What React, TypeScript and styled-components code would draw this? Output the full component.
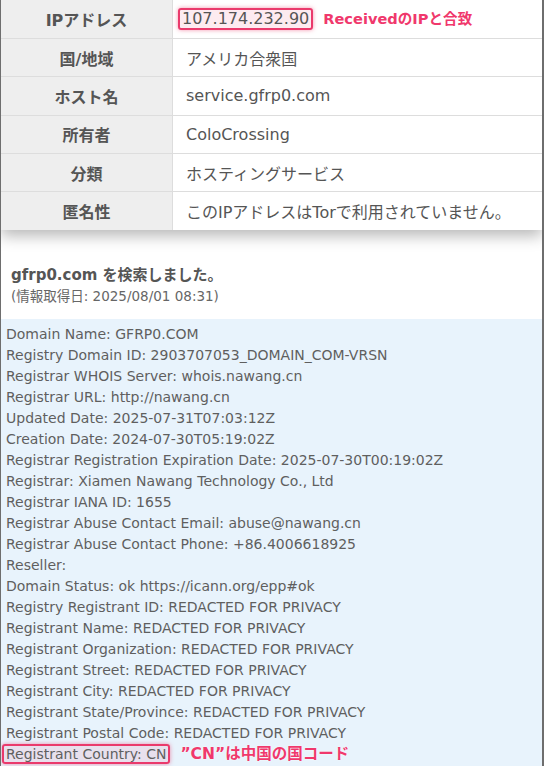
import React from 'react';
import styled, { createGlobalStyle } from 'styled-components';

const GlobalStyle = createGlobalStyle`
  html, body {
    margin: 0;
    padding: 0;
    background: #ffffff;
  }
  body {
    font-family: "DejaVu Sans", "Noto Sans CJK JP", sans-serif;
    color: #555555;
  }
`;

const Frame = styled.div`
  width: 544px;
  height: 766px;
  box-sizing: border-box;
  border-left: 1px solid #6e6e6e;
  border-right: 2px solid #6e6e6e;
  overflow: hidden;
  background: #ffffff;
`;

const InfoTable = styled.table`
  width: 100%;
  border-collapse: collapse;
  box-shadow: 0 6px 14px rgba(0, 0, 0, 0.28);
  font-size: 16px;
`;

const Row = styled.tr`
  height: 38.4px;
  border-bottom: 1px solid #dddddd;
  &:last-child {
    border-bottom: none;
  }
`;

const HeadCell = styled.th`
  width: 171px;
  background: #eeeeee;
  border-right: 1px solid #dddddd;
  font-weight: bold;
  color: #555555;
  text-align: center;
  padding: 0;
`;

const ValueCell = styled.td`
  background: #ffffff;
  padding: 0 0 0 13px;
  color: #555555;
  white-space: nowrap;
`;

const Marked = styled.span<{ $tight?: boolean }>`
  display: inline-block;
  border: 2px solid #ea3a6c;
  border-radius: 3px;
  background: rgba(234, 58, 108, 0.1);
  box-shadow: 0 0 4px rgba(234, 58, 108, 0.55);
  margin-left: ${(p) => (p.$tight ? '-4px' : '-8px')};
  padding: ${(p) => (p.$tight ? '0 2px 0 2px' : '0 2px')};
  line-height: ${(p) => (p.$tight ? '16px' : '18px')};
`;

const Note = styled.span<{ $size: number }>`
  margin-left: 10px;
  color: #f0386c;
  font-weight: bold;
  font-size: ${(p) => p.$size}px;
  text-shadow: 0 0 2px rgba(255, 255, 255, 0.9);
`;

const SearchHead = styled.div`
  padding: 35px 10px 0;
`;

const SearchTitle = styled.div`
  font-weight: bold;
  font-size: 15px;
  line-height: 21px;
  color: #555555;
`;

const SearchDate = styled.div`
  font-size: 13.5px;
  line-height: 21px;
  color: #666666;
`;

const WhoisBox = styled.div`
  margin-top: 12px;
  background: #e8f3fc;
  padding: 5px 5px 0;
  font-size: 14px;
  line-height: 21px;
  color: #5f5f5f;
  height: 460px;
`;

const WhoisLine = styled.div`
  white-space: nowrap;
`;

const rows: [string, React.ReactNode][] = [
  [
    'IPアドレス',
    <>
      <Marked>107.174.232.90</Marked>
      <Note $size={14.6}>ReceivedのIPと合致</Note>
    </>,
  ],
  ['国/地域', 'アメリカ合衆国'],
  ['ホスト名', 'service.gfrp0.com'],
  ['所有者', 'ColoCrossing'],
  ['分類', 'ホスティングサービス'],
  ['匿名性', 'このIPアドレスはTorで利用されていません。'],
];

const whois = [
  'Domain Name: GFRP0.COM',
  'Registry Domain ID: 2903707053_DOMAIN_COM-VRSN',
  'Registrar WHOIS Server: whois.nawang.cn',
  'Registrar URL: http://nawang.cn',
  'Updated Date: 2025-07-31T07:03:12Z',
  'Creation Date: 2024-07-30T05:19:02Z',
  'Registrar Registration Expiration Date: 2025-07-30T00:19:02Z',
  'Registrar: Xiamen Nawang Technology Co., Ltd',
  'Registrar IANA ID: 1655',
  'Registrar Abuse Contact Email: abuse@nawang.cn',
  'Registrar Abuse Contact Phone: +86.4006618925',
  'Reseller:',
  'Domain Status: ok https://icann.org/epp#ok',
  'Registry Registrant ID: REDACTED FOR PRIVACY',
  'Registrant Name: REDACTED FOR PRIVACY',
  'Registrant Organization: REDACTED FOR PRIVACY',
  'Registrant Street: REDACTED FOR PRIVACY',
  'Registrant City: REDACTED FOR PRIVACY',
  'Registrant State/Province: REDACTED FOR PRIVACY',
  'Registrant Postal Code: REDACTED FOR PRIVACY',
];

const App: React.FC = () => {
  return (
    <>
      <GlobalStyle />
      <Frame>
        <InfoTable>
          <tbody>
            {rows.map(([label, value]) => (
              <Row key={label}>
                <HeadCell>{label}</HeadCell>
                <ValueCell>{value}</ValueCell>
              </Row>
            ))}
          </tbody>
        </InfoTable>
        <SearchHead>
          <SearchTitle>gfrp0.com を検索しました。</SearchTitle>
          <SearchDate>(情報取得日: 2025/08/01 08:31)</SearchDate>
        </SearchHead>
        <WhoisBox>
          {whois.map((line) => (
            <WhoisLine key={line}>{line}</WhoisLine>
          ))}
          <WhoisLine>
            <Marked $tight>Registrant Country: CN</Marked>
            <Note $size={15.5}>”CN”は中国の国コード</Note>
          </WhoisLine>
        </WhoisBox>
      </Frame>
    </>
  );
};

export default App;
